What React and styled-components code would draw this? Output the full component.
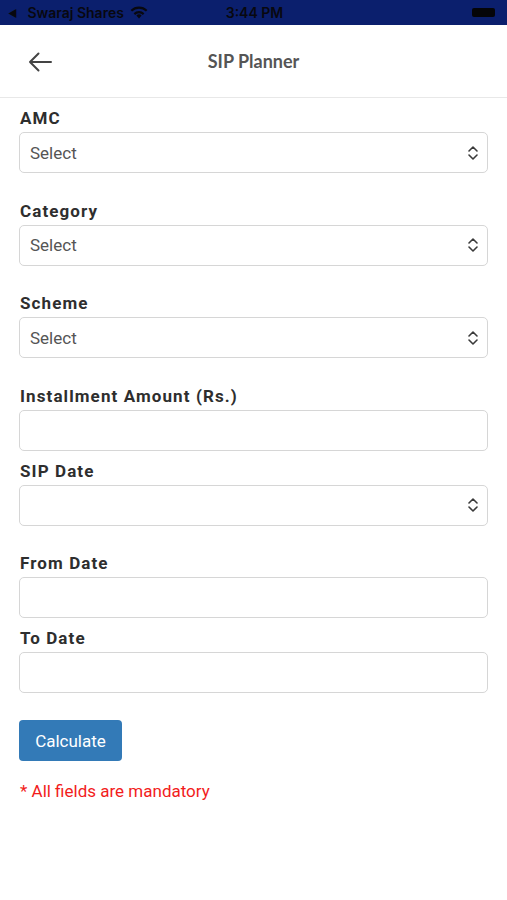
import React from 'react'
import styled, { createGlobalStyle } from 'styled-components'

const GlobalStyle = createGlobalStyle`
  html, body {
    margin: 0;
    padding: 0;
    background: #fff;
  }
  * { box-sizing: border-box; }
`

const fields = [
  { label: 'AMC', kind: 'select', value: 'Select' },
  { label: 'Category', kind: 'select', value: 'Select' },
  { label: 'Scheme', kind: 'select', value: 'Select' },
  { label: 'Installment Amount (Rs.)', kind: 'input' },
  { label: 'SIP Date', kind: 'select', value: '' },
  { label: 'From Date', kind: 'input' },
  { label: 'To Date', kind: 'input' }
]

const WifiIcon = () => (
  <svg width="18" height="13" viewBox="0 0 18 13">
    <path d="M9 12.5l2.6-3a3.6 3.6 0 0 0-5.2 0z" fill="#08080f" />
    <path d="M3.6 7.2a7.8 7.8 0 0 1 10.8 0l-1.5 1.7a5.5 5.5 0 0 0-7.8 0z" fill="#08080f" />
    <path d="M.6 3.9a12.2 12.2 0 0 1 16.8 0l-1.5 1.7a9.9 9.9 0 0 0-13.8 0z" fill="#08080f" />
  </svg>
)

const BackArrow = () => (
  <svg width="26" height="22" viewBox="0 0 26 22">
    <path
      d="M24 11H3M11.5 2.5L3 11l8.5 8.5"
      fill="none"
      stroke="#444"
      strokeWidth="2"
      strokeLinecap="round"
      strokeLinejoin="round"
    />
  </svg>
)

const UpDown = () => (
  <svg width="12" height="16" viewBox="0 0 12 16">
    <path
      d="M2 6l4-4 4 4M2 10l4 4 4-4"
      fill="none"
      stroke="#3a3a3a"
      strokeWidth="1.6"
      strokeLinecap="round"
      strokeLinejoin="round"
    />
  </svg>
)

const App = () => {
  return (
    <Page>
      <GlobalStyle />
      <StatusBar>
        <div className="left">
          <span className="tri">◀</span>
          <span>Swaraj Shares</span>
          <WifiIcon />
        </div>
        <div className="time">3:44 PM</div>
        <div className="right">
          <Battery />
        </div>
      </StatusBar>
      <Header>
        <BackBtn aria-label="back">
          <BackArrow />
        </BackBtn>
        <Title>SIP Planner</Title>
      </Header>
      <Form>
        {fields.map((f) => (
          <Field key={f.label} select={f.kind === 'select' ? 1 : 0}>
            <Label>{f.label}</Label>
            <Box>
              <span>{f.value}</span>
              {f.kind === 'select' && <UpDown />}
            </Box>
          </Field>
        ))}
        <CalcButton>Calculate</CalcButton>
        <Note>* All fields are mandatory</Note>
      </Form>
    </Page>
  )
}

const Page = styled.div`
  width: 507px;
  min-height: 900px;
  background: #fff;
  font-family: Roboto, 'Liberation Sans', sans-serif;
`

const StatusBar = styled.div`
  height: 25px;
  background: #0b1f6d;
  display: grid;
  grid-template-columns: 1fr auto 1fr;
  align-items: center;
  padding: 0 12px 0 8px;
  color: #08080f;
  font-family: Inter, 'Liberation Sans', sans-serif;
  font-size: 14px;
  font-weight: 600;
  .left {
    display: flex;
    align-items: center;
    gap: 6px;
  }
  .tri {
    font-size: 10px;
    margin-right: 4px;
  }
  .time {
    text-align: center;
    padding-left: 6px;
  }
  .right {
    display: flex;
    justify-content: flex-end;
  }
`

const Battery = styled.div`
  width: 23px;
  height: 9px;
  border-radius: 2px;
  background: #050508;
`

const Header = styled.div`
  height: 73px;
  border-bottom: 1px solid #e8e8e8;
  display: flex;
  align-items: center;
  position: relative;
  justify-content: center;
`

const BackBtn = styled.div`
  position: absolute;
  left: 27px;
  top: 26px;
  display: flex;
`

const Title = styled.div`
  font-family: Lato, 'Liberation Sans', sans-serif;
  font-weight: 700;
  font-size: 18px;
  color: #555;
`

const Form = styled.div`
  padding: 10px 19px 0 19px;
  display: flex;
  flex-direction: column;
`

const Field = styled.div`
  display: flex;
  flex-direction: column;
  margin-bottom: ${(p) => (p.select ? '27.5px' : '10px')};
`

const Label = styled.div`
  font-size: 17px;
  font-weight: 700;
  letter-spacing: 1.1px;
  color: #2e2e2e;
  line-height: 20px;
  padding-left: 1px;
  margin-bottom: 4px;
`

const Box = styled.div`
  height: 41px;
  border: 1px solid #d6d6d6;
  border-radius: 5px;
  display: flex;
  align-items: center;
  justify-content: space-between;
  padding: 0 8px 0 10px;
  font-size: 17px;
  color: #555;
`

const CalcButton = styled.button`
  align-self: flex-start;
  width: 103px;
  height: 41px;
  margin-top: 17px;
  border: none;
  border-radius: 4px;
  background: #337ab7;
  color: #fff;
  font-family: Roboto, 'Liberation Sans', sans-serif;
  font-size: 17px;
  padding: 0;
`

const Note = styled.div`
  margin-top: 20px;
  padding-left: 1px;
  color: #f21c1c;
  font-size: 17px;
`

export default App
